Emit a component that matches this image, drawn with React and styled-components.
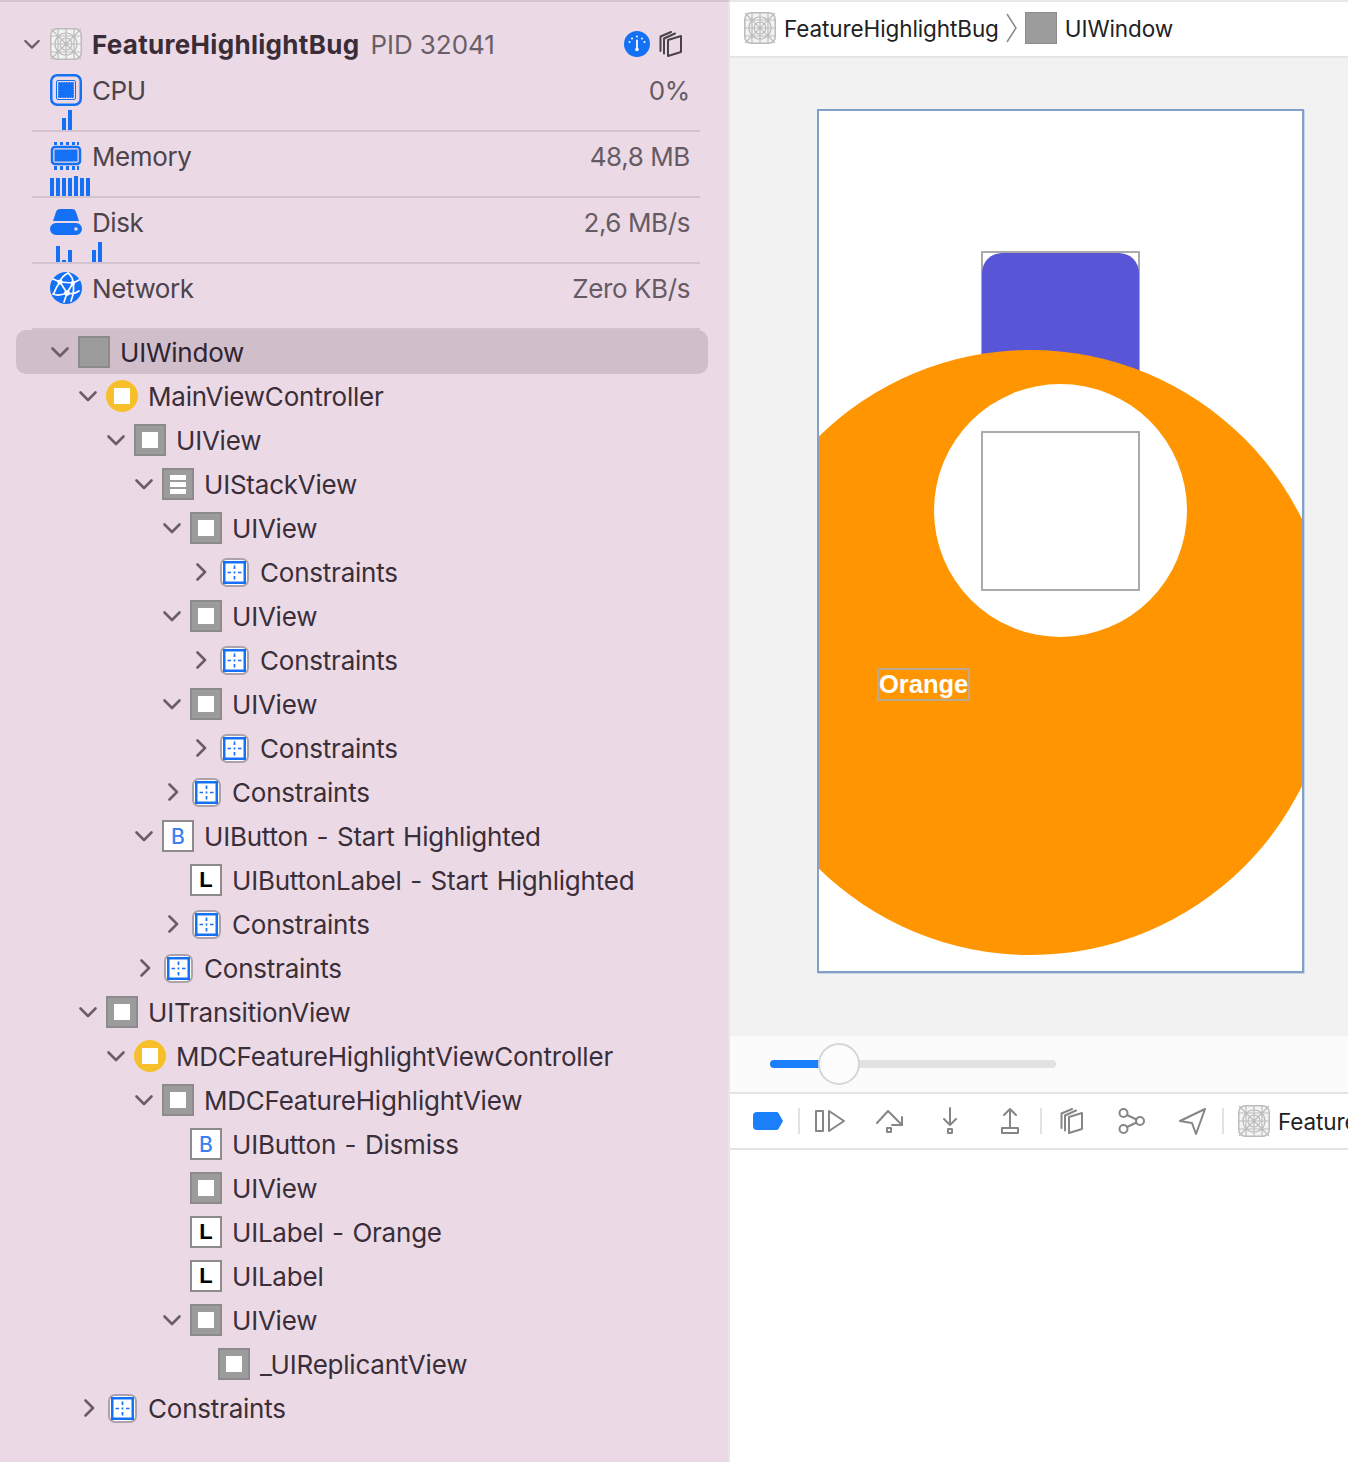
import React from 'react';
import styled, {createGlobalStyle} from 'styled-components';

const GlobalStyle = createGlobalStyle`
  html, body {
    margin: 0;
    padding: 0;
    background: #fff;
  }

  body {
    font-family: Inter, "Noto Sans", "Liberation Sans", sans-serif;
    overflow: hidden;
  }
`;

const Page = styled.div`
  display: flex;
  width: 1348px;
  height: 1462px;
  overflow: hidden;
`;

const Sidebar = styled.aside`
  box-sizing: border-box;
  width: 730px;
  flex: none;
  padding-top: 20px;
  background: #ebdae5;
  border-top: 2px solid #d3c3ce;
  border-right: 2px solid #e9e4e8;
  color: #3a2e39;
`;

const AppHeader = styled.div`
  display: flex;
  align-items: center;
  height: 44px;
  padding-left: 24px;
  font-size: 26px;
`;

const HeaderChevron = styled.span`
  display: flex;
  justify-content: center;
  width: 16px;
  margin-right: 10px;
`;

const AppName = styled.span`
  margin-left: 10px;
  font-weight: 700;
  letter-spacing: 0.3px;
  color: #3a2d38;
`;

const Pid = styled.span`
  margin-left: 11px;
  letter-spacing: -0.05px;
  color: #6a5f69;
`;

const HeaderTools = styled.div`
  display: flex;
  align-items: center;
  gap: 9px;
  margin-left: auto;
  margin-right: 45px;
`;

const Gauge = styled.section`
  box-sizing: border-box;
  height: 66px;
  width: 668px;
  margin-left: 32px;
  padding-top: 4px;
  border-bottom: 2px solid #d3c3ce;
`;

const GaugeRow = styled.div`
  display: flex;
  align-items: center;
  height: 40px;
  padding: 0 10px 0 18px;
  font-size: 26px;
  letter-spacing: -0.4px;
  color: #4c434b;
`;

const GaugeName = styled.span`
  margin-left: 10px;
`;

const GaugeValue = styled.span`
  margin-left: auto;
  color: #665b64;
`;

const Bars = styled.div`
  display: flex;
  align-items: flex-end;
  gap: 2px;
  height: 20px;
  padding-left: 18px;
`;

const Bar = styled.i`
  display: block;
  width: 4px;
  height: ${(p) => p.$h}px;
  background: #1470f5;
`;

const Tree = styled.ul`
  list-style: none;
  margin: 0 0 0 16px;
  padding: 0;
  width: 692px;
`;

const TreeRow = styled.li`
  display: flex;
  align-items: center;
  height: 44px;
  padding-left: ${(p) => 34 + p.$depth * 28}px;
  border-radius: 10px;
  font-size: 26px;
  letter-spacing: -0.22px;
  word-spacing: 1.5px;
  white-space: nowrap;
  color: ${(p) => (p.$selected ? '#2e2431' : '#3a2e39')};
  background: ${(p) => (p.$selected ? '#d1becb' : 'transparent')};
`;

const ChevronSlot = styled.span`
  display: flex;
  justify-content: center;
  box-sizing: border-box;
  width: 20px;
  margin-right: 8px;
  padding-left: ${(p) => (p.$closed ? 3 : 0)}px;
`;

const RowLabel = styled.span`
  margin-left: 10px;
`;

const NodeIcon = styled.span`
  box-sizing: border-box;
  display: flex;
  align-items: center;
  justify-content: center;
  flex: none;
  width: 32px;
  height: 32px;
`;

const GrayIcon = styled(NodeIcon)`
  background: #9c9c9c;
  border: 2px solid #8d8a8d;
`;

const WhiteCore = styled.i`
  display: block;
  width: 16px;
  height: 16px;
  background: #fff;
`;

const StackCore = styled.i`
  display: flex;
  flex-direction: column;
  gap: 2px;
  width: 16px;

  b {
    display: block;
    height: 5px;
    background: #fff;
  }
`;

const ControllerIcon = styled(NodeIcon)`
  background: #f7bf2a;
  border-radius: 50%;
`;

const LetterIcon = styled(NodeIcon)`
  background: #fff;
  border: 2px solid #8d8a8d;
  font-family: ${(p) => (p.$blue ? 'Inter, sans-serif' : '"Liberation Sans", Arial, sans-serif')};
  font-size: ${(p) => (p.$blue ? 21 : 22)}px;
  font-weight: ${(p) => (p.$blue ? 500 : 700)};
  letter-spacing: 0;
  color: ${(p) => (p.$blue ? '#3a80f2' : '#000')};
`;

const ConstraintIcon = styled(NodeIcon)`
  background: #fff;
  border: 2px solid #aca2ab;
  border-radius: 7px;
  width: 29px;
  height: 29px;
  margin: 0 1px 0 2px;
`;

const Detail = styled.main`
  display: flex;
  flex-direction: column;
  flex: 1;
  min-width: 0;
  background: #fff;
  color: #222;
`;

const Breadcrumb = styled.nav`
  box-sizing: border-box;
  display: flex;
  align-items: center;
  height: 58px;
  padding: 0 0 2px 14px;
  border-top: 2px solid #e8e8e8;
  border-bottom: 2px solid #e4e4e4;
  font-size: 22.5px;
  letter-spacing: -0.1px;
`;

const CrumbText = styled.span`
  margin-left: 8px;
`;

const CrumbSwatch = styled.i`
  box-sizing: border-box;
  display: block;
  width: 32px;
  height: 32px;
  margin-left: 8px;
  background: #9c9c9c;
  border: 1px solid #8d8a8d;
`;

const CrumbDivider = styled.span`
  display: flex;
  margin-left: 7px;
`;

const Canvas = styled.div`
  box-sizing: border-box;
  height: 978px;
  padding: 51px 0 0 87px;
  background: #f2f2f2;
`;

const Device = styled.div`
  box-sizing: border-box;
  position: relative;
  width: 487px;
  height: 864px;
  overflow: hidden;
  background: #fff;
  border: 2px solid #82a0ca;
  box-shadow: 1px 1px 0 rgba(130, 160, 202, 0.35);
`;

const ButtonBox = styled.div`
  box-sizing: border-box;
  position: absolute;
  left: 162px;
  top: 140px;
  width: 159px;
  height: 160px;
  background: #fff;
  border: 2px solid #ababab;
`;

const ButtonFill = styled.div`
  height: 100%;
  margin: 0 -1px;
  background: #5856d6;
  border-radius: 20px;
`;

const OrangeDisc = styled.div`
  position: absolute;
  left: -91px;
  top: 239px;
  width: 605px;
  height: 605px;
  border-radius: 50%;
  background: #ff9500;
`;

const WhiteDisc = styled.div`
  position: absolute;
  left: 115px;
  top: 273px;
  width: 253px;
  height: 253px;
  border-radius: 50%;
  background: #fff;
`;

const TargetBox = styled.div`
  box-sizing: border-box;
  position: absolute;
  left: 162px;
  top: 320px;
  width: 159px;
  height: 160px;
  border: 2px solid #ababab;
`;

const OrangeLabel = styled.div`
  box-sizing: border-box;
  position: absolute;
  left: 58px;
  top: 557px;
  width: 93px;
  height: 33px;
  border: 2px solid #bda98d;
  font-family: "Liberation Sans", Arial, sans-serif;
  font-size: 25.5px;
  font-weight: 700;
  line-height: 29px;
  text-align: center;
  color: #fff;
`;

const SliderBand = styled.div`
  box-sizing: border-box;
  display: flex;
  align-items: center;
  height: 58px;
  padding-left: 40px;
  background: #fbfbfb;
  border-bottom: 2px solid #e4e4e4;
`;

const SliderTrack = styled.div`
  position: relative;
  width: 286px;
  height: 8px;
  border-radius: 4px;
  background: #e2e2e2;
`;

const SliderFill = styled.div`
  width: 52px;
  height: 100%;
  border-radius: 4px 0 0 4px;
  background: #1a7ff8;
`;

const SliderThumb = styled.div`
  box-sizing: border-box;
  position: absolute;
  left: 48px;
  top: -17px;
  width: 42px;
  height: 42px;
  border-radius: 50%;
  background: #fcfcfc;
  border: 2px solid #d6d6d6;
`;

const DebugBar = styled.div`
  box-sizing: border-box;
  display: flex;
  align-items: center;
  flex: none;
  height: 56px;
  padding-left: 8px;
  border-bottom: 2px solid #e4e4e4;
  font-size: 22.5px;
  letter-spacing: -0.1px;
  white-space: nowrap;
  overflow: hidden;
`;

const ToolSlot = styled.span`
  display: flex;
  align-items: center;
  justify-content: center;
  flex: none;
  width: 60px;
`;

const ToolDivider = styled.i`
  display: block;
  flex: none;
  width: 2px;
  height: 26px;
  background: #e2e2e2;
`;

const DebugApp = styled.span`
  display: flex;
  align-items: center;
  gap: 8px;
  margin-left: 14px;
`;

function Chevron({open, color = '#6a5f69'}) {
  return open ? (
    <svg width="18" height="11" viewBox="0 0 18 11" fill="none">
      <path d="M1.5 1.5 9 9l7.5-7.5" stroke={color} strokeWidth="2.6" strokeLinecap="round" strokeLinejoin="round" />
    </svg>
  ) : (
    <svg width="11" height="18" viewBox="0 0 11 18" fill="none">
      <path d="M1.5 1.5 9 9l-7.5 7.5" stroke={color} strokeWidth="2.6" strokeLinecap="round" strokeLinejoin="round" />
    </svg>
  );
}

function AppIcon() {
  return (
    <svg width="32" height="32" viewBox="0 0 32 32" fill="none" stroke="#bcbcbc" strokeWidth="1.200">
      <rect x="0.75" y="0.75" width="30.5" height="30.5" rx="6.5" fill="#f3f3f3" strokeWidth="1.500" />
      <path d="M1 1l30 30M31 1 1 31M1 8h30M1 16h30M1 24h30M8 1v30M16 1v30M24 1v30" />
      <circle cx="16" cy="16" r="11" />
      <circle cx="16" cy="16" r="6" />
    </svg>
  );
}

function CpuIcon() {
  return (
    <svg width="32" height="32" viewBox="0 0 32 32" fill="none">
      <rect x="1.25" y="1.25" width="29.5" height="29.5" rx="6" stroke="#1470f5" strokeWidth="2.5" />
      <rect x="6.5" y="6.5" width="19" height="19" rx="1.5" stroke="#1470f5" strokeWidth="1" />
      <rect x="8.5" y="8.5" width="15" height="15" fill="#1470f5" stroke="#1470f5" strokeWidth="1" strokeDasharray="1.5 1" />
    </svg>
  );
}

function MemoryIcon() {
  return (
    <svg width="32" height="28" viewBox="0 0 32 28" fill="none">
      <path d="M4 0h3v3H4zM10 0h3v3h-3zM16 0h3v3h-3zM22 0h3v3h-3zM27 0h2v3h-2zM4 24h3v4H4zM10 24h3v4h-3zM16 24h3v4h-3zM22 24h3v4h-3zM27 24h2v4h-2z" fill="#1470f5" />
      <rect x="2" y="5" width="28" height="17" rx="3" stroke="#1470f5" strokeWidth="2.5" />
      <rect x="4.5" y="7.5" width="23" height="12" fill="#1470f5" />
    </svg>
  );
}

function DiskIcon() {
  return (
    <svg width="32" height="26" viewBox="0 0 32 26" fill="#1470f5">
      <path d="M3 12 6 3c.6-1.900 2-3 4-3h12c2 0 3.400 1.100 4 3l3 9z" />
      <path fillRule="evenodd" d="M6 14h20a6 6 0 0 1 0 12H6a6 6 0 0 1 0-12zm20 4.200a1.800 1.800 0 1 0 0 3.600 1.800 1.800 0 0 0 0-3.600z" />
    </svg>
  );
}

function NetworkIcon() {
  return (
    <svg width="32" height="32" viewBox="0 0 32 32" fill="none">
      <circle cx="16" cy="16" r="16" fill="#1470f5" />
      <g stroke="#fff" strokeWidth="1.700" strokeLinecap="round">
        <path d="M10 10c1-4 4-7 8-9M18 1c4 3 5 6 5 10M23 11c1 5 1 11-2 18M10 10l13 1M10 10l7 11M23 11l-6 10M10 10 3 7M23 11l6-3M10 10c-3 4-5 8-6 11M3 22c4 2 9 1 14-1M17 21c4 1 8 1 12-2M17 21l-3 9" />
      </g>
      <g fill="#fff">
        <circle cx="10" cy="10" r="2.600" />
        <circle cx="23" cy="11" r="2.200" />
        <circle cx="17" cy="21" r="2.800" />
      </g>
    </svg>
  );
}

function GaugeBadge() {
  return (
    <svg width="26" height="26" viewBox="0 0 26 26" fill="none">
      <circle cx="13" cy="13" r="13" fill="#1470f5" />
      <path d="M13 9.500V18" stroke="#fff" strokeWidth="1.800" strokeLinecap="round" />
      <circle cx="13" cy="18.500" r="1.800" fill="#fff" />
      <g fill="#fff">
        <circle cx="5.500" cy="11" r="1" />
        <circle cx="8" cy="7.500" r="1" />
        <circle cx="13" cy="5.500" r="1" />
        <circle cx="18" cy="7.500" r="1" />
        <circle cx="20.500" cy="11" r="1" />
      </g>
    </svg>
  );
}

function StackedPages({color}) {
  return (
    <svg width="24" height="26" viewBox="0 0 24 26" fill="none" stroke={color} strokeWidth="2" strokeLinejoin="round" strokeLinecap="round">
      <path d="M9 9l13-4v16L9 25z" />
      <path d="M5 22.500V7.500L16 2.500" />
      <path d="M1.500 20V5.500L12 1" />
    </svg>
  );
}

function ConstraintGlyph() {
  return (
    <svg width="23" height="23" viewBox="0 0 23 23" fill="none" stroke="#1470f5">
      <rect x="1.250" y="1.250" width="20.500" height="20.500" strokeWidth="2.500" />
      <path d="M11.500 4.500v3.500M11.500 10.500v2M11.500 15v3.500M4.500 11.500h3.500M15 11.500h3.500" strokeWidth="1.700" />
    </svg>
  );
}

function NodeGlyph({kind}) {
  switch (kind) {
    case 'window':
      return <GrayIcon />;
    case 'view':
      return <GrayIcon><WhiteCore /></GrayIcon>;
    case 'stack':
      return <GrayIcon><StackCore><b /><b /><b /></StackCore></GrayIcon>;
    case 'controller':
      return <ControllerIcon><WhiteCore /></ControllerIcon>;
    case 'button':
      return <LetterIcon $blue>B</LetterIcon>;
    case 'label':
      return <LetterIcon>L</LetterIcon>;
    default:
      return <ConstraintIcon><ConstraintGlyph /></ConstraintIcon>;
  }
}

const debugStroke = {fill: 'none', stroke: '#868686', strokeWidth: 2, strokeLinecap: 'round', strokeLinejoin: 'round'};

function BreakpointIcon() {
  return (
    <svg width="30" height="18" viewBox="0 0 30 18">
      <path d="M4 0h19c1.200 0 2 .5 2.600 1.300L30 9l-4.400 7.700c-.6.800-1.400 1.300-2.600 1.300H4a4 4 0 0 1-4-4V4a4 4 0 0 1 4-4z" fill="#1a7ff8" />
    </svg>
  );
}

function ContinueIcon() {
  return (
    <svg width="30" height="24" viewBox="0 0 30 24" {...debugStroke}>
      <rect x="1" y="2" width="7" height="20" />
      <path d="M14 2v20l15-10z" />
    </svg>
  );
}

function StepOverIcon() {
  return (
    <svg width="28" height="28" viewBox="0 0 28 28" {...debugStroke}>
      <path d="M1 16 12 4l14 14" />
      <path d="M16 18h10v-8" />
      <rect x="11" y="21" width="4" height="4" />
    </svg>
  );
}

function StepIntoIcon() {
  return (
    <svg width="16" height="28" viewBox="0 0 16 28" {...debugStroke}>
      <path d="M8 1v17M2 12l6 6 6-6" />
      <rect x="6" y="22" width="4" height="4" />
    </svg>
  );
}

function StepOutIcon() {
  return (
    <svg width="20" height="28" viewBox="0 0 20 28" {...debugStroke}>
      <path d="M10 20V2M4 8l6-6 6 6" />
      <rect x="2" y="21" width="16" height="5" />
    </svg>
  );
}

function GraphIcon() {
  return (
    <svg width="28" height="28" viewBox="0 0 28 28" {...debugStroke}>
      <circle cx="5.500" cy="6" r="4" />
      <circle cx="5.500" cy="22" r="4" />
      <circle cx="22" cy="14" r="4" />
      <path d="M9 8l9.500 4.500M9 20l9.500-4.500" />
    </svg>
  );
}

function LocationIcon() {
  return (
    <svg width="28" height="28" viewBox="0 0 28 28" {...debugStroke}>
      <path d="M27 2 2 14l12 2 4 11z" />
    </svg>
  );
}

const gauges = [
  {name: 'CPU', value: '0%', icon: <CpuIcon />, bars: [0, 0, 12, 20]},
  {name: 'Memory', value: '48,8 MB', icon: <MemoryIcon />, bars: [18, 18, 18, 18, 20, 18, 18]},
  {name: 'Disk', value: '2,6 MB/s', icon: <DiskIcon />, bars: [0, 16, 2, 12, 0, 0, 0, 12, 20]},
  {name: 'Network', value: 'Zero KB/s', icon: <NetworkIcon />},
];

const nodes = [
  {depth: 0, kind: 'window', text: 'UIWindow', open: true, selected: true},
  {depth: 1, kind: 'controller', text: 'MainViewController', open: true},
  {depth: 2, kind: 'view', text: 'UIView', open: true},
  {depth: 3, kind: 'stack', text: 'UIStackView', open: true},
  {depth: 4, kind: 'view', text: 'UIView', open: true},
  {depth: 5, kind: 'constraints', text: 'Constraints', open: false},
  {depth: 4, kind: 'view', text: 'UIView', open: true},
  {depth: 5, kind: 'constraints', text: 'Constraints', open: false},
  {depth: 4, kind: 'view', text: 'UIView', open: true},
  {depth: 5, kind: 'constraints', text: 'Constraints', open: false},
  {depth: 4, kind: 'constraints', text: 'Constraints', open: false},
  {depth: 3, kind: 'button', text: 'UIButton - Start Highlighted', open: true},
  {depth: 4, kind: 'label', text: 'UIButtonLabel - Start Highlighted'},
  {depth: 4, kind: 'constraints', text: 'Constraints', open: false},
  {depth: 3, kind: 'constraints', text: 'Constraints', open: false},
  {depth: 1, kind: 'view', text: 'UITransitionView', open: true},
  {depth: 2, kind: 'controller', text: 'MDCFeatureHighlightViewController', open: true},
  {depth: 3, kind: 'view', text: 'MDCFeatureHighlightView', open: true},
  {depth: 4, kind: 'button', text: 'UIButton - Dismiss'},
  {depth: 4, kind: 'view', text: 'UIView'},
  {depth: 4, kind: 'label', text: 'UILabel - Orange'},
  {depth: 4, kind: 'label', text: 'UILabel'},
  {depth: 4, kind: 'view', text: 'UIView', open: true},
  {depth: 5, kind: 'view', text: '_UIReplicantView'},
  {depth: 1, kind: 'constraints', text: 'Constraints', open: false},
];

function App() {
  return (
    <Page>
      <GlobalStyle />
      <Sidebar>
        <AppHeader>
          <HeaderChevron><Chevron open /></HeaderChevron>
          <AppIcon />
          <AppName>FeatureHighlightBug</AppName>
          <Pid>PID 32041</Pid>
          <HeaderTools>
            <GaugeBadge />
            <StackedPages color="#4a4249" />
          </HeaderTools>
        </AppHeader>

        {gauges.map((g) => (
          <Gauge key={g.name}>
            <GaugeRow>
              {g.icon}
              <GaugeName>{g.name}</GaugeName>
              <GaugeValue>{g.value}</GaugeValue>
            </GaugeRow>
            {g.bars && (
              <Bars>
                {g.bars.map((h, j) => <Bar key={j} $h={h} />)}
              </Bars>
            )}
          </Gauge>
        ))}

        <Tree>
          {nodes.map((n, i) => (
            <TreeRow key={i} $depth={n.depth} $selected={n.selected}>
              <ChevronSlot $closed={n.open === false}>
                {n.open !== undefined && <Chevron open={n.open} />}
              </ChevronSlot>
              <NodeGlyph kind={n.kind} />
              <RowLabel>{n.text}</RowLabel>
            </TreeRow>
          ))}
        </Tree>
      </Sidebar>

      <Detail>
        <Breadcrumb>
          <AppIcon />
          <CrumbText>FeatureHighlightBug</CrumbText>
          <CrumbDivider>
            <svg width="11" height="30" viewBox="0 0 11 30" fill="none">
              <path d="M1 1l9 14-9 14" stroke="#8b8b8b" strokeWidth="1.500" />
            </svg>
          </CrumbDivider>
          <CrumbSwatch />
          <CrumbText>UIWindow</CrumbText>
        </Breadcrumb>

        <Canvas>
          <Device>
            <ButtonBox><ButtonFill /></ButtonBox>
            <OrangeDisc />
            <WhiteDisc />
            <TargetBox />
            <OrangeLabel>Orange</OrangeLabel>
          </Device>
        </Canvas>

        <SliderBand>
          <SliderTrack>
            <SliderFill />
            <SliderThumb />
          </SliderTrack>
        </SliderBand>

        <DebugBar>
          <ToolSlot><BreakpointIcon /></ToolSlot>
          <ToolDivider />
          <ToolSlot><ContinueIcon /></ToolSlot>
          <ToolSlot><StepOverIcon /></ToolSlot>
          <ToolSlot><StepIntoIcon /></ToolSlot>
          <ToolSlot><StepOutIcon /></ToolSlot>
          <ToolDivider />
          <ToolSlot><StackedPages color="#868686" /></ToolSlot>
          <ToolSlot><GraphIcon /></ToolSlot>
          <ToolSlot><LocationIcon /></ToolSlot>
          <ToolDivider />
          <DebugApp>
            <AppIcon />
            FeatureHighlightBug
          </DebugApp>
        </DebugBar>
      </Detail>
    </Page>
  );
}

export default App;
